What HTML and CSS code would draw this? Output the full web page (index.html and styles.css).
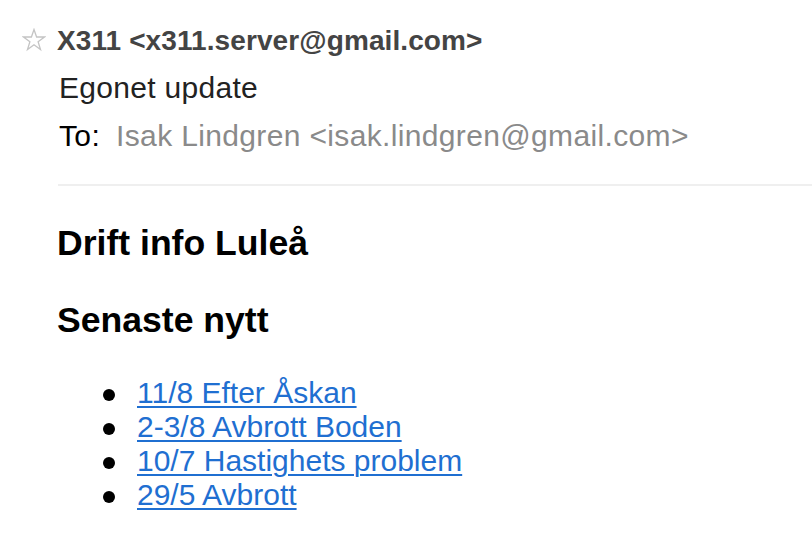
FILE: index.html
```html
<!DOCTYPE html>
<html lang="sv">
<head>
<meta charset="utf-8">
<title>Egonet update</title>
<link rel="stylesheet" href="styles.css">
</head>
<body>
<div class="mail">
  <header class="head">
    <div class="from-row">
      <svg class="star" width="24" height="24" viewBox="0 0 24 24" aria-hidden="true">
        <polygon points="12,1.5 14.6,9 22.5,9 16.1,13.8 18.5,21.5 12,16.8 5.5,21.5 7.9,13.8 1.5,9 9.4,9" fill="none" stroke="#c4c4c4" stroke-width="1.3" stroke-linejoin="miter"/>
      </svg>
      <span class="from">X311 &lt;x311.server@gmail.com&gt;</span>
    </div>
    <div class="subject">Egonet update</div>
    <div class="to-row"><span class="to-label">To:</span><span class="to">Isak Lindgren &lt;isak.lindgren@gmail.com&gt;</span></div>
  </header>
  <hr class="rule">
  <section class="body">
    <h3 class="title">Drift info Luleå</h3>
    <h3 class="title second">Senaste nytt</h3>
    <ul class="news">
      <li><a href="#">11/8 Efter Åskan</a></li>
      <li><a href="#">2-3/8 Avbrott Boden</a></li>
      <li><a href="#">10/7 Hastighets problem</a></li>
      <li><a href="#">29/5 Avbrott</a></li>
    </ul>
  </section>
</div>
</body>
</html>
```
FILE: styles.css
```css
html, body {
  margin: 0;
  padding: 0;
  background: #ffffff;
}
body {
  font-family: "Liberation Sans", Arial, sans-serif;
  width: 812px;
  height: 550px;
  overflow: hidden;
}
.mail {
  display: flex;
  flex-direction: column;
}
.head {
  display: flex;
  flex-direction: column;
  padding-top: 18px;
  padding-left: 57px;
}
.from-row {
  position: relative;
  display: flex;
  align-items: center;
  height: 46px;
}
.star {
  position: absolute;
  left: -35px;
  top: 10px;
}
.from {
  font-size: 28px;
  font-weight: bold;
  color: #444444;
  line-height: 46px;
  letter-spacing: 0.1px;
}
.subject {
  height: 48px;
  line-height: 48px;
  font-size: 30px;
  color: #222222;
  padding-left: 2px;
  letter-spacing: 0.3px;
}
.to-row {
  height: 48px;
  line-height: 48px;
  font-size: 30px;
  display: flex;
  gap: 16px;
  padding-left: 2px;
  letter-spacing: 0.35px;
}
.to-label {
  color: #000000;
}
.to {
  color: #8a8a8a;
}
.rule {
  margin: 24px 0 0 58px;
  border: 0;
  height: 2px;
  background: #efefef;
}
.body {
  padding-left: 57px;
  display: flex;
  flex-direction: column;
}
.title {
  margin: 37px 0 0 0;
  font-size: 35.6px;
  line-height: 41px;
  font-weight: bold;
  color: #000000;
}
.title.second {
  margin-top: 36px;
}
.news {
  list-style: none;
  margin: 35px 0 0 0;
  padding: 0 0 0 80px;
}
.news li {
  position: relative;
  font-size: 30px;
  line-height: 34px;
  height: 34px;
}
.news li::before {
  content: "";
  position: absolute;
  left: -34px;
  top: 13px;
  width: 12px;
  height: 12px;
  border-radius: 50%;
  background: #000000;
}
.news a {
  color: #1f6fd1;
  text-decoration: underline;
  text-decoration-thickness: 2px;
  text-underline-offset: 3px;
}
```
